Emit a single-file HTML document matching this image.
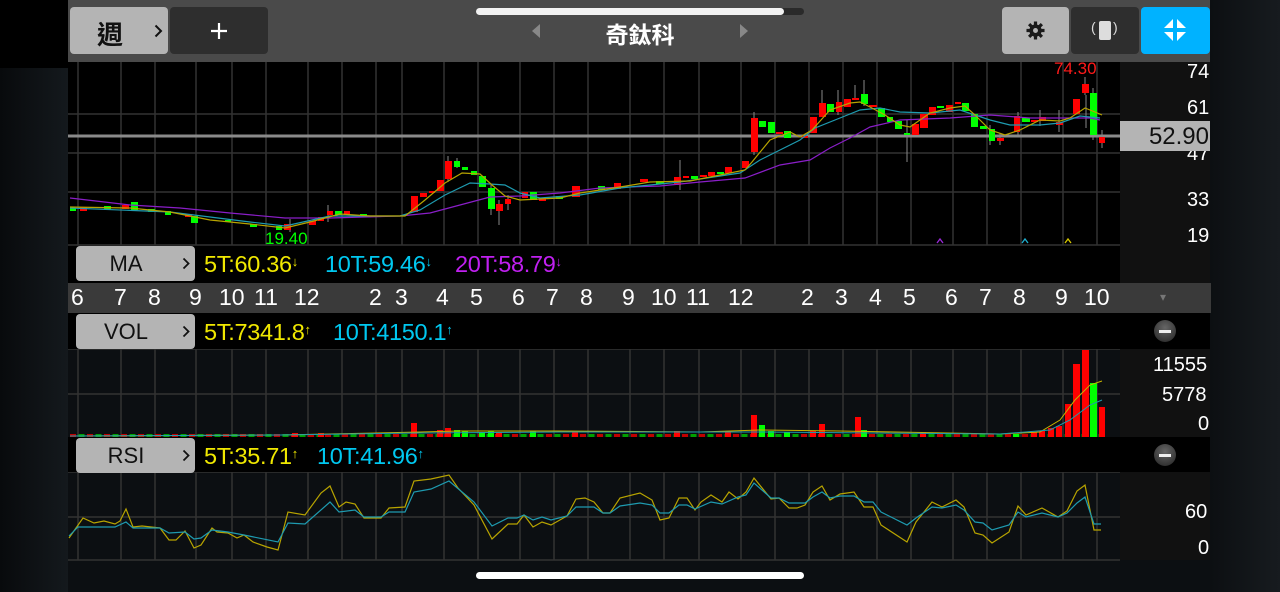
<!DOCTYPE html>
<html><head><meta charset="utf-8"><style>
*{margin:0;padding:0;box-sizing:border-box}
body{width:1280px;height:592px;overflow:hidden;background:#0c0f12;font-family:"Liberation Sans","Noto Sans CJK TC",sans-serif;position:relative}
.a{position:absolute}
.btn{position:absolute;border-radius:4px;background:#b4b4b4;color:#111}
.lbl{position:absolute;color:#fff;font-size:20px}
.row{position:absolute;left:68px;width:1052px;background:#000}
.rbtn{position:absolute;left:76px;width:119px;height:35px;background:#b4b4b4;border-radius:4px;color:#111;font-size:22px}
.rbtn span{position:absolute;left:0;width:100px;text-align:center;top:5px}
.rbtn svg{position:absolute;right:5px;top:11px}
.t{position:absolute;font-size:23.5px;top:6px;white-space:nowrap;letter-spacing:-0.3px}
.t small{font-size:13px;vertical-align:6px}
</style></head><body>
<div class="a" style="left:0;top:0;width:68px;height:68px;background:#000"></div>
<div class="a" style="left:0;top:68px;width:68px;height:524px;background:linear-gradient(90deg,#080a0c,#14191d)"></div>
<div class="a" style="left:1210px;top:0;width:70px;height:592px;background:linear-gradient(90deg,#0c0f12,#171b1f)"></div>
<!-- header -->
<div class="a" style="left:68px;top:0;width:1142px;height:62px;background:#4a4a4a"></div>
<div class="btn" style="left:70px;top:7px;width:98px;height:47px;font-size:26px"><span class="a" style="left:27px;top:8px;font-weight:bold">週</span><svg class="a" style="left:84px;top:17px" width="9" height="14" viewBox="0 0 9 14"><path d="M1.5 1.5L7 7L1.5 12.5" fill="none" stroke="#111" stroke-width="2"/></svg></div>
<div class="btn" style="left:170px;top:7px;width:98px;height:47px;background:#2e2e2e"><svg class="a" style="left:40px;top:15px" width="18" height="18"><path d="M9 1V17M1 9H17" stroke="#fff" stroke-width="2.2"/></svg></div>
<div class="a" style="left:476px;top:8px;width:328px;height:7px;border-radius:4px;background:#2a2a2a"></div>
<div class="a" style="left:476px;top:8px;width:308px;height:7px;border-radius:4px;background:#f2f2f2"></div>
<div class="a" style="left:532px;top:24px;width:0;height:0;border-top:7px solid transparent;border-bottom:7px solid transparent;border-right:8px solid #888"></div>
<div class="a" style="left:740px;top:24px;width:0;height:0;border-top:7px solid transparent;border-bottom:7px solid transparent;border-left:8px solid #888"></div>
<div class="a" style="left:590px;top:16px;width:100px;text-align:center;color:#fff;font-size:23px;font-weight:bold">奇鈦科</div>
<div class="btn" style="left:1002px;top:7px;width:67px;height:47px">
<svg class="a" style="left:24px;top:14px" width="19" height="19" viewBox="0 0 20 20"><g fill="#1a1a1a"><circle cx="10" cy="10" r="6.5"/><g stroke="#1a1a1a" stroke-width="3.4"><path d="M10 0.5V19.5M0.5 10H19.5M3.3 3.3L16.7 16.7M16.7 3.3L3.3 16.7"/></g></g><circle cx="10" cy="10" r="2.6" fill="#b4b4b4"/></svg></div>
<div class="btn" style="left:1071px;top:7px;width:68px;height:47px;background:#2e2e2e"><div class="a" style="left:28px;top:14px;width:12px;height:19px;background:#ddd;border-radius:2px"></div><span class="a" style="left:20px;top:12px;color:#ddd;font-size:14px">(</span><span class="a" style="left:42px;top:12px;color:#ddd;font-size:14px">)</span></div>
<div class="btn" style="left:1141px;top:7px;width:69px;height:47px;background:#00b2ff">
<svg class="a" style="left:23px;top:12px" width="22" height="22" viewBox="0 0 22 22" fill="#fff"><path d="M9 0V9H0L9 0Z M13 0V9H22L13 0Z M9 22V13H0L9 22Z M13 22V13H22L13 22Z"/></svg></div>
<!-- main chart -->
<div class="row" style="top:62px;height:183px"></div>
<div class="a" style="left:1120px;top:62px;width:90px;height:221px;background:#111"></div>
<div class="row" style="top:245px;height:38px"></div>
<svg class="a" style="left:0;top:0" width="1280" height="592">
<defs><pattern id="vb" x="70" y="0" width="17" height="10" patternUnits="userSpaceOnUse"><rect x="0" y="0" width="6" height="10" fill="#c00000"/><rect x="8.5" y="0" width="6" height="10" fill="#00a000"/></pattern></defs>
<g stroke="#333" stroke-width="1.5" fill="none">
<path d="M78 62V245M121 62V245M155 62V245M196 62V245M232 62V245M266 62V245M308 62V245M342 62V245M376 62V245M402 62V245M444 62V245M478 62V245M520 62V245M554 62V245M588 62V245M630 62V245M664 62V245M699 62V245M741 62V245M775 62V245M809 62V245M843 62V245M877 62V245M911 62V245M953 62V245M987 62V245M1021 62V245M1063 62V245M1097 62V245"/>
<path d="M68 114H1120M68 153H1120M68 192H1120M68 245H1120"/>
<path d="M78 349V437M121 349V437M155 349V437M196 349V437M232 349V437M266 349V437M308 349V437M342 349V437M376 349V437M402 349V437M444 349V437M478 349V437M520 349V437M554 349V437M588 349V437M630 349V437M664 349V437M699 349V437M741 349V437M775 349V437M809 349V437M843 349V437M877 349V437M911 349V437M953 349V437M987 349V437M1021 349V437M1063 349V437M1097 349V437"/>
<path d="M68 349H1120M68 394H1120"/>
<path d="M78 472V560M121 472V560M155 472V560M196 472V560M232 472V560M266 472V560M308 472V560M342 472V560M376 472V560M402 472V560M444 472V560M478 472V560M520 472V560M554 472V560M588 472V560M630 472V560M664 472V560M699 472V560M741 472V560M775 472V560M809 472V560M843 472V560M877 472V560M911 472V560M953 472V560M987 472V560M1021 472V560M1063 472V560M1097 472V560"/>
<path d="M68 472H1120M68 517H1120M68 560H1120"/>
</g>
<path d="M68 136H1120" stroke="#8a8a8a" stroke-width="3"/>
<g stroke="#888" stroke-width="1">
<path d="M448 156V182M457 158V168M491 185V215M499 200V225M508 195V210M680 160V190M754 112V155M838 90V115M864 80V106M907 120V162M1085 77V95M1086 95V128M1093 88V140M1102 130V148M1018 112V135M1059 110V132M1040 110V126M990 125V145M1000 133V145M822 90V108M855 85V100M328 205V222M290 219V232"/>
</g>
<g fill="#ff0000">
<rect x="80" y="207" width="7" height="4"/><rect x="122" y="205" width="7" height="4"/><rect x="185" y="214" width="7" height="3"/><rect x="284" y="224" width="7" height="6"/><rect x="309" y="221" width="7" height="4"/><rect x="318" y="217" width="6" height="4"/><rect x="327" y="211" width="6" height="4"/><rect x="344" y="211" width="6" height="4"/><rect x="411" y="196" width="7" height="16"/><rect x="420" y="193" width="7" height="4"/><rect x="429" y="191" width="6" height="2"/><rect x="437" y="180" width="7" height="11"/><rect x="445" y="161" width="7" height="18"/><rect x="496" y="204" width="7" height="7"/><rect x="505" y="199" width="6" height="5"/><rect x="522" y="192" width="6" height="6"/><rect x="539" y="198" width="7" height="3"/><rect x="572" y="186" width="8" height="11"/><rect x="614" y="183" width="7" height="6"/><rect x="640" y="179" width="8" height="3"/><rect x="674" y="177" width="7" height="8"/><rect x="683" y="176" width="6" height="2"/><rect x="700" y="175" width="7" height="2"/><rect x="708" y="172" width="7" height="4"/><rect x="725" y="167" width="7" height="6"/><rect x="742" y="161" width="7" height="7"/><rect x="751" y="118" width="7" height="34"/><rect x="776" y="132" width="7" height="2"/><rect x="802" y="136" width="6" height="2"/><rect x="810" y="117" width="7" height="16"/><rect x="819" y="103" width="7" height="14"/><rect x="836" y="102" width="6" height="10"/><rect x="844" y="99" width="7" height="8"/><rect x="852" y="98" width="7" height="2"/><rect x="869" y="105" width="8" height="2"/><rect x="912" y="124" width="7" height="11"/><rect x="920" y="114" width="8" height="14"/><rect x="929" y="107" width="7" height="8"/><rect x="946" y="105" width="7" height="7"/><rect x="955" y="102" width="6" height="2"/><rect x="997" y="138" width="7" height="3"/><rect x="1014" y="116" width="6" height="16"/><rect x="1031" y="120" width="7" height="2"/><rect x="1039" y="117" width="7" height="4"/><rect x="1056" y="122" width="7" height="3"/><rect x="1073" y="99" width="7" height="15"/><rect x="1082" y="84" width="7" height="9"/><rect x="1099" y="137" width="6" height="6"/>
</g>
<g fill="#00ff00">
<rect x="70" y="208" width="6" height="3"/><rect x="104" y="206" width="7" height="3"/><rect x="131" y="202" width="7" height="8"/><rect x="148" y="209" width="7" height="3"/><rect x="165" y="211" width="6" height="4"/><rect x="191" y="216" width="7" height="7"/><rect x="225" y="220" width="6" height="2"/><rect x="250" y="224" width="7" height="3"/><rect x="276" y="226" width="6" height="4"/><rect x="335" y="211" width="7" height="4"/><rect x="360" y="214" width="7" height="3"/><rect x="454" y="161" width="6" height="6"/><rect x="462" y="167" width="6" height="3"/><rect x="471" y="171" width="6" height="4"/><rect x="479" y="176" width="7" height="11"/><rect x="488" y="188" width="7" height="21"/><rect x="530" y="192" width="7" height="8"/><rect x="556" y="196" width="7" height="3"/><rect x="598" y="186" width="7" height="4"/><rect x="656" y="181" width="8" height="3"/><rect x="691" y="176" width="7" height="3"/><rect x="717" y="172" width="7" height="2"/><rect x="759" y="121" width="7" height="6"/><rect x="768" y="122" width="7" height="11"/><rect x="784" y="131" width="7" height="7"/><rect x="827" y="104" width="7" height="8"/><rect x="861" y="94" width="7" height="10"/><rect x="878" y="108" width="7" height="9"/><rect x="887" y="117" width="6" height="5"/><rect x="895" y="121" width="7" height="8"/><rect x="904" y="133" width="6" height="2"/><rect x="937" y="106" width="7" height="2"/><rect x="962" y="103" width="7" height="8"/><rect x="971" y="114" width="7" height="13"/><rect x="980" y="126" width="7" height="3"/><rect x="989" y="129" width="6" height="12"/><rect x="1022" y="118" width="8" height="4"/><rect x="1090" y="93" width="7" height="42"/>
</g>
<g fill="none" stroke-width="1.2">
<polyline stroke="#8a1ec8" points="70,198 130,205 180,208 230,213 285,218 330,218 400,216 430,213 460,205 490,197 520,196 560,193 600,188 660,186 700,182 745,178 780,165 810,160 830,148 850,138 870,127 900,120 950,118 990,115 1030,118 1070,118 1090,118 1100,120"/>
<polyline stroke="#1e9bb0" points="70,208 170,212 250,222 285,226 330,216 400,216 420,210 445,195 470,183 490,184 505,185 520,193 540,198 580,195 620,188 680,182 740,173 760,160 780,150 800,140 815,128 840,118 860,110 880,108 900,112 930,113 960,110 990,120 1010,125 1040,125 1060,123 1080,116 1100,118"/>
<polyline stroke="#b8a400" points="70,207 130,208 170,212 210,220 250,224 285,228 310,222 340,214 370,216 405,216 425,200 445,183 462,173 480,174 492,185 505,196 520,200 560,198 580,193 620,187 650,182 690,181 720,175 745,170 752,162 770,140 790,132 800,137 812,130 830,110 850,103 860,102 870,107 885,115 900,125 910,127 930,113 950,108 965,106 975,115 990,130 1005,135 1020,130 1040,120 1060,121 1070,118 1085,108 1095,112 1102,115"/>
</g>
<g fill="none" stroke-width="1.3"><path d="M937 243L940 239L943 243" stroke="#9a2ad8"/><path d="M1022 243L1025 239L1028 243" stroke="#1eb0d0"/><path d="M1065 243L1068 239L1071 243" stroke="#d8c800"/></g>
<!-- volume bars -->
<rect x="70" y="434" width="1030" height="3" fill="url(#vb)"/>
<g fill="#ff0000">
<rect x="411" y="423" width="6" height="14"/><rect x="437" y="430" width="6" height="7"/><rect x="445" y="428" width="6" height="9"/><rect x="292" y="433" width="6" height="4"/><rect x="318" y="433" width="6" height="4"/><rect x="496" y="432" width="6" height="5"/><rect x="572" y="432" width="6" height="5"/><rect x="674" y="431" width="6" height="6"/><rect x="725" y="432" width="6" height="5"/><rect x="751" y="415" width="6" height="22"/><rect x="810" y="431" width="6" height="6"/><rect x="819" y="424" width="6" height="13"/><rect x="855" y="417" width="6" height="20"/><rect x="920" y="432" width="6" height="5"/><rect x="1031" y="432" width="6" height="5"/><rect x="1039" y="431" width="6" height="6"/><rect x="1048" y="428" width="6" height="9"/><rect x="1056" y="426" width="6" height="11"/><rect x="1065" y="404" width="6" height="33"/><rect x="1073" y="364" width="7" height="73"/><rect x="1082" y="350" width="7" height="87"/><rect x="1099" y="407" width="6" height="30"/>
</g>
<g fill="#00ff00">
<rect x="454" y="430" width="6" height="7"/><rect x="462" y="431" width="6" height="6"/><rect x="479" y="432" width="6" height="5"/><rect x="488" y="431" width="6" height="6"/><rect x="530" y="431" width="6" height="6"/><rect x="759" y="425" width="6" height="12"/><rect x="768" y="431" width="6" height="6"/><rect x="784" y="432" width="6" height="5"/><rect x="861" y="430" width="6" height="7"/><rect x="1090" y="383" width="7" height="54"/><rect x="1013" y="434" width="6" height="3"/>
</g>
<polyline fill="none" stroke="#c8b400" stroke-width="1" points="70,436 280,435 420,432 460,431 560,431 700,432 760,430 840,431 1000,434 1040,432 1060,420 1075,400 1090,385 1102,381"/>
<polyline fill="none" stroke="#1e9bb0" stroke-width="1" points="70,436 280,435 420,433 560,432 760,432 1000,434 1050,430 1070,420 1090,405 1102,400"/>
<!-- RSI -->
<polyline fill="none" stroke="#b8a400" stroke-width="1.2" points="69,538 83,518 94,523 104,521 115,524 120,521 126,509 133,527 142,526 160,528 169,540 176,540 185,531 194,548 201,545 212,528 217,532 228,533 237,538 244,535 253,542 267,547 278,550 288,512 305,515 321,493 330,486 339,507 346,502 355,504 364,518 381,518 389,508 405,507 414,481 431,479 449,475 458,488 474,505 492,539 508,524 517,524 524,515 533,527 542,522 551,525 567,516 576,499 585,498 594,502 603,513 610,513 620,498 640,493 652,500 660,520 669,518 679,498 687,498 695,510 701,502 711,495 722,502 729,492 738,499 746,492 754,478 771,499 779,498 789,508 797,508 805,505 813,492 822,486 830,500 840,494 854,492 864,507 873,507 881,525 907,542 916,522 932,502 942,507 956,500 964,507 975,533 983,535 992,543 1009,532 1018,506 1026,515 1042,508 1058,517 1067,511 1077,491 1085,485 1094,530 1101,530"/>
<polyline fill="none" stroke="#1e9bb0" stroke-width="1.2" points="69,536 78,527 88,527 115,527 126,522 133,528 160,528 169,533 185,532 194,539 201,538 212,530 228,532 244,535 278,542 288,523 305,524 330,502 339,512 355,510 364,517 381,517 389,512 405,512 414,492 431,489 449,481 474,502 492,526 508,518 517,518 524,515 533,520 542,517 551,520 567,516 576,507 594,507 603,513 610,513 620,506 640,503 652,505 660,513 669,513 679,505 687,505 695,509 711,502 722,504 738,497 746,495 754,483 771,498 779,498 789,503 805,503 813,497 822,492 830,498 840,496 854,496 864,502 873,502 881,512 907,525 916,518 932,507 942,508 956,505 964,510 975,522 983,523 992,530 1009,525 1018,512 1026,517 1042,513 1058,517 1067,513 1077,503 1085,497 1094,524 1101,524"/>
</svg>
<div class="a" style="left:1054px;top:59px;color:#ff1a1a;font-size:17px">74.30</div>
<div class="a" style="left:265px;top:229px;color:#00ff00;font-size:17px">19.40</div>
<div class="lbl" style="left:1187px;top:61px">74</div>
<div class="lbl" style="left:1187px;top:97px">61</div>
<div class="lbl" style="left:1187px;top:143px">47</div>
<div class="lbl" style="left:1187px;top:189px">33</div>
<div class="lbl" style="left:1187px;top:225px">19</div>
<div class="a" style="left:1120px;top:121px;width:90px;height:30px;background:#b4b4b4;color:#111;font-size:24px;text-align:right;padding-right:1px;line-height:31px">52.90</div>
<div class="rbtn" style="top:246px"><span>MA</span><svg width="8" height="13" viewBox="0 0 8 13"><path d="M1.5 1.5L6.5 6.5L1.5 11.5" fill="none" stroke="#111" stroke-width="1.8"/></svg></div>
<div class="t" style="left:204px;top:251px;color:#f0e800">5T:60.36<small>↓</small></div>
<div class="t" style="left:325px;top:251px;color:#00c8f0">10T:59.46<small>↓</small></div>
<div class="t" style="left:455px;top:251px;color:#c020f0">20T:58.79<small>↓</small></div>
<!-- date row -->
<div class="a" style="left:68px;top:283px;width:1143px;height:30px;background:#3a3a3a"></div>
<div class="a" style="top:284px;left:0;width:1280px;height:28px;color:#fff;font-size:23px">
<span class="a" style="left:71px">6</span><span class="a" style="left:114px">7</span><span class="a" style="left:148px">8</span><span class="a" style="left:189px">9</span><span class="a" style="left:219px">10</span><span class="a" style="left:254px">11</span><span class="a" style="left:294px">12</span><span class="a" style="left:369px">2</span><span class="a" style="left:395px">3</span><span class="a" style="left:436px">4</span><span class="a" style="left:470px">5</span><span class="a" style="left:512px">6</span><span class="a" style="left:546px">7</span><span class="a" style="left:580px">8</span><span class="a" style="left:622px">9</span><span class="a" style="left:651px">10</span><span class="a" style="left:686px">11</span><span class="a" style="left:728px">12</span><span class="a" style="left:801px">2</span><span class="a" style="left:835px">3</span><span class="a" style="left:869px">4</span><span class="a" style="left:903px">5</span><span class="a" style="left:945px">6</span><span class="a" style="left:979px">7</span><span class="a" style="left:1013px">8</span><span class="a" style="left:1055px">9</span><span class="a" style="left:1084px">10</span>
<span class="a" style="left:1160px;top:6px;font-size:12px;color:#777">▾</span>
</div>
<!-- VOL -->
<div class="row" style="top:313px;height:36px;width:1142px"></div>
<div class="rbtn" style="top:314px"><span>VOL</span><svg width="8" height="13" viewBox="0 0 8 13"><path d="M1.5 1.5L6.5 6.5L1.5 11.5" fill="none" stroke="#111" stroke-width="1.8"/></svg></div>
<div class="t" style="left:204px;top:319px;color:#f0e800">5T:7341.8<small>↑</small></div>
<div class="t" style="left:333px;top:319px;color:#00c8f0">10T:4150.1<small>↑</small></div>
<div class="a" style="left:1154px;top:320px;width:22px;height:22px;border-radius:50%;background:radial-gradient(circle at 50% 35%,#666,#222)"><div class="a" style="left:5px;top:10px;width:12px;height:3px;background:#eee"></div></div>
<div class="a" style="left:1120px;top:349px;width:90px;height:88px;background:#111"></div>
<div class="lbl" style="left:1153px;top:354px">11555</div>
<div class="lbl" style="left:1162px;top:384px">5778</div>
<div class="lbl" style="left:1198px;top:413px">0</div>
<!-- RSI -->
<div class="row" style="top:437px;height:35px;width:1142px"></div>
<div class="rbtn" style="top:438px"><span>RSI</span><svg width="8" height="13" viewBox="0 0 8 13"><path d="M1.5 1.5L6.5 6.5L1.5 11.5" fill="none" stroke="#111" stroke-width="1.8"/></svg></div>
<div class="t" style="left:204px;top:443px;color:#f0e800">5T:35.71<small>↑</small></div>
<div class="t" style="left:317px;top:443px;color:#00c8f0">10T:41.96<small>↑</small></div>
<div class="a" style="left:1154px;top:444px;width:22px;height:22px;border-radius:50%;background:radial-gradient(circle at 50% 35%,#666,#222)"><div class="a" style="left:5px;top:10px;width:12px;height:3px;background:#eee"></div></div>
<div class="a" style="left:1120px;top:472px;width:90px;height:88px;background:#111"></div>
<div class="lbl" style="left:1185px;top:501px">60</div>
<div class="lbl" style="left:1198px;top:537px">0</div>
<div class="a" style="left:476px;top:572px;width:328px;height:7px;border-radius:4px;background:#fff"></div>
</body></html>
